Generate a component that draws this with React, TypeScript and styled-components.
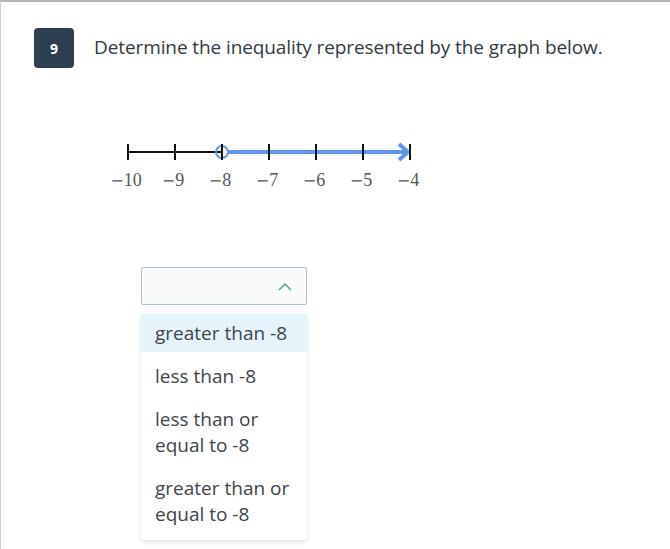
import styled, { createGlobalStyle } from 'styled-components'

const GlobalStyle = createGlobalStyle`
  html, body {
    margin: 0;
    padding: 0;
    background: #ffffff;
  }
  body {
    font-family: 'Open Sans', 'Liberation Sans', sans-serif;
  }
`

const OPTIONS = ['greater than -8', 'less than -8', 'less than or equal to -8', 'greater than or equal to -8']
const LABELS = [-10, -9, -8, -7, -6, -5, -4]

const Page = styled.div`
  box-sizing: border-box;
  width: 670px;
  height: 549px;
  border-top: 2px solid #b4b4b4;
  border-left: 1px solid #d4d4d4;
  padding: 26px 0 0 33px;
  overflow: hidden;
`

const Header = styled.div`
  display: flex;
  align-items: center;
  gap: 20px;
`

const Badge = styled.div`
  width: 40px;
  height: 40px;
  border-radius: 4px;
  background: #2d3e50;
  color: #ffffff;
  font-size: 14px;
  font-weight: 700;
  display: flex;
  align-items: center;
  justify-content: center;
`

const Prompt = styled.div`
  font-size: 19px;
  color: #333a40;
  margin-top: -2px;
  letter-spacing: -0.1px;
`

const Body = styled.div`
  padding-left: 60px;
  display: flex;
  flex-direction: column;
`

const Graph = styled.svg`
  margin-top: 67px;
  display: block;
`

const Select = styled.div`
  margin: 70px 0 0 47px;
  box-sizing: border-box;
  width: 166px;
  height: 38px;
  border: 1px solid #a9c0cf;
  border-radius: 2px;
  background: #f8fafb;
  display: flex;
  align-items: center;
  justify-content: flex-end;
  padding-right: 14px;
`

const Menu = styled.ul`
  list-style: none;
  margin: 9px 0 0 47px;
  padding: 0 0 7px;
  width: 166px;
  background: #ffffff;
  border-radius: 0 0 4px 4px;
  box-shadow: 0 2px 5px rgba(0, 0, 0, 0.12);
  display: flex;
  flex-direction: column;
  gap: 5px;
`

const Option = styled.li<{ $active?: boolean }>`
  padding: 6px 14px;
  font-size: 19px;
  line-height: 26px;
  color: #404548;
  background: ${p => (p.$active ? '#e5f3fb' : 'transparent')};
`

const NumberLine = () => {
  const x = (i: number) => 34 + i * 47
  return (
    <Graph width="330" height="62" viewBox="0 0 330 62">
      <line x1={x(0)} y1="17" x2={x(2)} y2="17" stroke="#111" strokeWidth="2" />
      <line x1={x(2) + 6} y1="17" x2={x(6) - 3} y2="17" stroke="#6495ed" strokeWidth="4" />
      <polyline
        points={`${x(6) - 11},9 ${x(6) - 2},17 ${x(6) - 11},25`}
        fill="none"
        stroke="#6495ed"
        strokeWidth="4"
        strokeLinejoin="miter"
      />
      <circle cx={x(2)} cy="17" r="6" fill="none" stroke="#6495ed" strokeWidth="2" />
      {LABELS.map((v, i) => (
        <g key={v}>
          <line x1={x(i)} y1="9" x2={x(i)} y2="25" stroke="#111" strokeWidth="2" />
          <text
            x={x(i) - 2}
            y="51"
            textAnchor="middle"
            fontFamily="'Liberation Serif', 'DejaVu Serif', serif"
            fontSize="18"
            fill="#555"
          >
            <tspan fontFamily="'DejaVu Serif', serif" fontSize="16">
              {'\u2212'}
            </tspan>
            {Math.abs(v)}
          </text>
        </g>
      ))}
    </Graph>
  )
}

const App = () => {
  return (
    <Page>
      <GlobalStyle />
      <Header>
        <Badge>9</Badge>
        <Prompt>Determine the inequality represented by the graph below.</Prompt>
      </Header>
      <Body>
        <NumberLine />
        <div>
          <Select>
            <svg width="14" height="9" viewBox="0 0 14 9">
              <polyline points="1,8 7,2 13,8" fill="none" stroke="#4fa396" strokeWidth="1.5" />
            </svg>
          </Select>
          <Menu>
            {OPTIONS.map((o, i) => (
              <Option key={o} $active={i === 0}>
                {o}
              </Option>
            ))}
          </Menu>
        </div>
      </Body>
    </Page>
  )
}

export default App
